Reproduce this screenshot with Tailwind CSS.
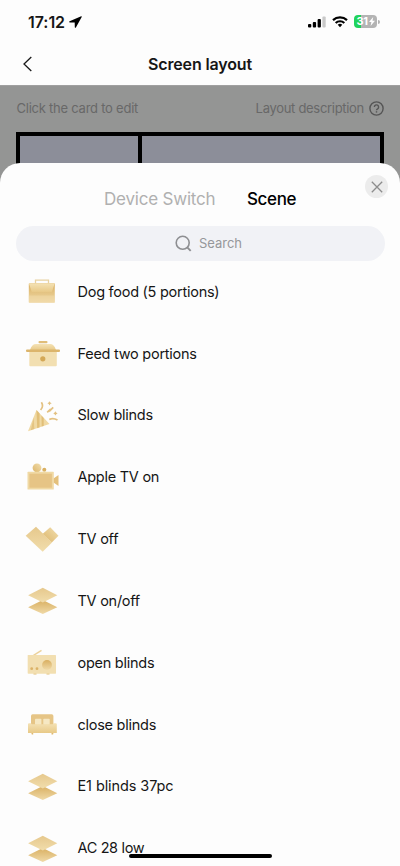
<!DOCTYPE html>
<html lang="en">
<head>
<meta charset="utf-8">
<title>Screen layout</title>
<script src="https://cdn.jsdelivr.net/npm/@tailwindcss/browser@4"></script>
</head>
<body class="bg-[#fdfdfd] font-['Inter','Liberation_Sans',sans-serif] text-[#161616]">
<svg class="absolute size-0" aria-hidden="true">
  <defs>
    <linearGradient id="g1" x1="0" y1="0" x2="0" y2="1"><stop offset="0" stop-color="#f4e2b5"/><stop offset="1" stop-color="#e8c987"/></linearGradient>
    <linearGradient id="g2" x1="0" y1="0" x2="0" y2="1"><stop offset="0" stop-color="#d9af61"/><stop offset="1" stop-color="#f0daa8"/></linearGradient>
    <linearGradient id="g4" x1="0" y1="1" x2="1" y2="0"><stop offset="0" stop-color="#dcb569"/><stop offset="1" stop-color="#f2dfb0"/></linearGradient>
    <linearGradient id="g5" x1="0" y1="0" x2="0" y2="1"><stop offset="0" stop-color="#e6c88c"/><stop offset="1" stop-color="#f1ddac"/></linearGradient>
    <symbol id="layers" viewBox="0 0 36 36"><path d="M18.8 17 33.3 24.2 18.8 31 4.1 24.2Z" fill="url(#g2)"/><path d="M18.8 4.7 33.3 12.2 18.8 19.5 4.1 12.2Z" fill="url(#g5)"/></symbol>
  </defs>
</svg>
<div class="relative flex h-[866px] w-[400px] flex-col overflow-hidden">
  <div class="flex h-[43px] shrink-0 items-center pl-[28px] pr-[20px]">
    <span class="text-[16px] font-semibold leading-none tracking-[-0.05px]">17:12</span>
    <svg class="ml-[4px] h-3 w-[13px]" viewBox="0 0 13 12"><path d="M12.2.2.6 5.3c-.6.3-.5 1 .2 1.1l4.9.2.1 4.6c.1.7.8.8 1.1.2L12.7.9c.2-.5 0-.8-.5-.7Z" fill="#000"/></svg>
    <svg class="ml-auto h-3 w-[18px]" viewBox="0 0 18 12"><g fill="#000"><rect y="8" width="3.3" height="3.6" rx="1"/><rect x="4.8" y="6" width="3.3" height="5.6" rx="1"/><rect x="9.6" y="3" width="3.3" height="8.6" rx="1"/></g><rect x="14.4" y="0.4" width="3.3" height="11.2" rx="1" fill="#c9c9c9"/></svg>
    <svg class="ml-[6px] h-[13px] w-4" viewBox="0 0 16 13"><g fill="none" stroke="#000" stroke-width="2.2"><path d="M1 5.1a10.3 10.3 0 0 1 14 0"/><path d="M3.7 8a6.2 6.2 0 0 1 8.6 0"/></g><path d="M8 12.3 5.7 9.8a3.3 3.3 0 0 1 4.6 0Z" fill="#000"/></svg>
    <div class="ml-[6px] flex h-[13px] w-[23px] items-center overflow-hidden rounded-[4px] bg-[linear-gradient(90deg,#20d35c_31%,#b4b4b4_31%)] pl-[2.5px] text-[11px] font-bold leading-none tracking-[-0.4px] text-white">31<svg class="ml-px h-[9px] w-[6px] shrink-0" viewBox="0 0 6 9"><path d="M4.2 0 0 5h2.4l-.8 4L6 3.8H3.5Z" fill="#fff"/></svg></div>
    <div class="ml-px h-1 w-[2px] rounded-r-full bg-[#b4b4b4]"></div>
  </div>
  <div class="relative flex h-[42px] shrink-0 items-center justify-center">
    <svg class="absolute left-[22px] top-[13px] h-4 w-[11px]" viewBox="0 0 11 16" fill="none" stroke="#1a1a1a" stroke-width="1.3"><path d="M9.3 1 2 8l7.3 7"/></svg>
    <h1 class="text-[16px] font-semibold leading-none tracking-[-0.15px]">Screen layout</h1>
  </div>
  <div class="h-[100px] shrink-0 border-t border-[#a0a0a0] bg-[#949594] px-4 text-[#686868]">
    <div class="flex h-[46px] items-center justify-between pb-[2px] pl-[0.5px]">
      <span class="text-[13px] leading-none tracking-[-0.24px]">Click the card to edit</span>
      <span class="flex items-center gap-[5px] text-[13px] leading-none"><span class="tracking-[-0.3px]">Layout description</span>
        <svg class="size-[15px]" viewBox="0 0 15 15" fill="none" stroke="#555" stroke-width="1.4"><circle cx="7.5" cy="7.5" r="6.6"/><path d="M5.4 6a2.1 2.1 0 1 1 3.2 1.8c-.7.4-1.1.7-1.1 1.4"/><path d="M7.5 10.2v1.4"/></svg></span>
    </div>
    <div class="flex h-[60px] border-4 border-black bg-[#8c8e99]"><div class="w-[121.5px] border-r-4 border-black"></div></div>
  </div>
  <section class="relative -mt-[22px] flex h-[703px] shrink-0 flex-col rounded-t-[20px] bg-[#fdfdfd]">
    <button class="absolute right-3 top-[12px] flex size-[23px] items-center justify-center rounded-full bg-[#ececec]" aria-label="Close"><svg class="size-3" viewBox="0 0 12 12" stroke="#8c8c8c" stroke-width="1.3"><path d="m.8.8 10.4 10.4M11.2.8.8 11.2"/></svg></button>
    <div class="flex h-[63px] shrink-0 items-center gap-[31.5px] pl-[104px] pt-[9px] text-[17px] leading-none">
      <span class="tracking-[-0.2px] text-[#b0b0b0]">Device Switch</span><span class="font-medium tracking-[-0.35px] text-black">Scene</span>
    </div>
    <div class="mx-[15.5px] flex h-[35px] shrink-0 items-center justify-center gap-[7px] rounded-full bg-[#f1f2f6] pl-[17px] text-[#96979a]">
      <svg class="size-[17px]" viewBox="0 0 17 17" fill="none" stroke="#8e8f92" stroke-width="1.6"><circle cx="7.7" cy="7.8" r="6.5"/><path d="m12.3 12.4 3.4 3.4" stroke-width="1.9"/></svg>
      <span class="text-[13px] leading-none">Search</span>
    </div>
    <ul class="flex flex-col pl-[24px] text-[14.5px] leading-none tracking-[-0.26px]">
      <li class="flex h-[61.85px] items-center gap-[17.5px]"><svg class="size-9" viewBox="0 0 36 36"><path d="M11.5 10V6.2h13V10" fill="none" stroke="#e8d2a1" stroke-width="1.3"/><rect x="4.8" y="9.3" width="26" height="19.5" rx=".8" fill="url(#g2)"/><path d="M4.8 9.3h26l-3 8.7H7.8Z" fill="url(#g1)"/><path d="M4.8 21.5h26v7.3h-26z" fill="#f1dcab" opacity=".5"/></svg><span>Dog food (5 portions)</span></li>
      <li class="flex h-[61.85px] items-center gap-[17.5px]"><svg class="size-9" viewBox="0 0 36 36"><rect x="14.5" y="5" width="9" height="2.2" rx="1" fill="#e0bd78"/><path d="M5.3 15h27.5v14.3a1 1 0 0 1-1 1H6.3a1 1 0 0 1-1-1Z" fill="#f2dfb1"/><path d="M6 14q2-5.9 5.8-5.9h14.4q3.8 0 5.8 5.9Z" fill="url(#g1)"/><rect x="2" y="13.4" width="34" height="2.6" rx="1" fill="#dcb56c"/><circle cx="18.8" cy="22.8" r="2.6" fill="#d4a857"/></svg><span>Feed two portions</span></li>
      <li class="flex h-[61.85px] items-center gap-[17.5px]"><svg class="size-9" viewBox="0 0 36 36"><path d="M12.5 12 25.5 26 4 33.3Z" fill="#f0d9a3"/><path d="m9.7 19.5.6 11.6L6.8 32.3Z" fill="#dcb56c" opacity=".6"/><path d="m12.5 12 3 3.2v14.2l-2.3.8ZM17.5 17.5l2.2 2.4v8l-2 .7Z" fill="#d6a956" opacity=".55"/><g fill="none" stroke="#e3c181" stroke-width="1.7"><path d="M17.4 4.2c1.8 2.7 1.3 5.4-.8 7.8M23.2 14.4l2.6-2.5.2.7 3.2-3.3M25.3 21.4c2.7-1.4 5.5-1 8.2.6"/></g><path d="m25.5 3.2.8 1.3 1.4.8-1.4.8-.8 1.4-.8-1.4-1.3-.8 1.3-.8ZM31.5 13.3l.7 1.3 1.4.8-1.4.8-.7 1.4-.9-1.4-1.3-.8 1.3-.8Z" fill="#e3c181"/></svg><span>Slow blinds</span></li>
      <li class="flex h-[61.85px] items-center gap-[17.5px]"><svg class="size-9" viewBox="0 0 36 36"><circle cx="13" cy="8.8" r="4.4" fill="url(#g4)"/><circle cx="20.3" cy="10.8" r="2" fill="#d9b061"/><path d="M29.5 19.5 34.5 16v11l-5-3.5Z" fill="#e4c07b"/><rect x="3.5" y="12.8" width="26.3" height="17.8" rx=".6" fill="#f0d9a4"/><rect x="5.4" y="14.7" width="22.5" height="14" fill="#e6c485"/></svg><span>Apple TV on</span></li>
      <li class="flex h-[61.85px] items-center gap-[17.5px]"><svg class="size-9" viewBox="0 0 36 36"><path d="m26.2 6.3 8.3 8.4-6.7 6.8-9.3-8.4Z" fill="url(#g4)"/><path d="M12 5.7 28 21.5l-9.3 9.2-17-16Z" fill="url(#g5)"/></svg><span>TV off</span></li>
      <li class="flex h-[61.85px] items-center gap-[17.5px]"><svg class="size-9"><use href="#layers"/></svg><span>TV on/off</span></li>
      <li class="flex h-[61.85px] items-center gap-[17.5px]"><svg class="size-9" viewBox="0 0 36 36"><path d="m9.5 10.4 8-5" stroke="#ecd199" stroke-width="1.4"/><path d="M9.5 28h3v1.5h-3zM22.5 28h3v1.5h-3z" fill="#e2bf79"/><rect x="3.7" y="9.9" width="28.3" height="18.8" rx=".6" fill="#f2dfb1"/><circle cx="23" cy="20" r="4.9" fill="url(#g2)"/><circle cx="7.7" cy="23.7" r="1.4" fill="#dbb267"/><circle cx="13" cy="23.7" r="1.4" fill="#dbb267"/></svg><span>open blinds</span></li>
      <li class="flex h-[61.85px] items-center gap-[17.5px]"><svg class="size-9" viewBox="0 0 36 36"><path d="M7 18V9a1.7 1.7 0 0 1 1.7-1.7h19A1.7 1.7 0 0 1 29.4 9v9Z" fill="#e6c586"/><path d="M7 25h2.2v2.6H7.8zM27.5 25h2.2l-.6 2.6h-1.6z" fill="#dfb970"/><rect x="11" y="11.8" width="6.4" height="6" rx=".8" fill="#f6e8c3"/><rect x="19.3" y="11.8" width="6.4" height="6" rx=".8" fill="#f6e8c3"/><path d="M4 17.3q0-1 1-1h2l.7 1h21l.7-1h2.4q1 0 1 1V26H4Z" fill="url(#g1)"/></svg><span>close blinds</span></li>
      <li class="flex h-[61.85px] items-center gap-[17.5px]"><svg class="size-9"><use href="#layers"/></svg><span class="tracking-[-0.1px]">E1 blinds 37pc</span></li>
      <li class="flex h-[61.85px] items-center gap-[17.5px]"><svg class="size-9"><use href="#layers"/></svg><span class="tracking-[-0.35px]">AC 28 low</span></li>
    </ul>
  </section>
  <div class="absolute left-[128.5px] top-[853.5px] h-[4.5px] w-[143px] rounded-full bg-black"></div>
</div>
</body>
</html>
